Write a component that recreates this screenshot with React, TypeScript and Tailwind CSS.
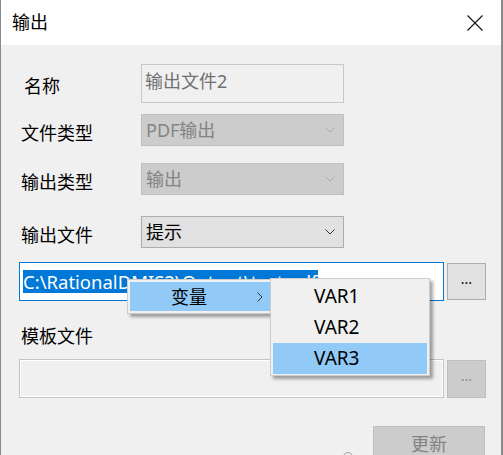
import React from "react";

const font = { fontFamily: '"Noto Sans", "Noto Sans CJK SC", sans-serif' };

function Chevron({ color }: { color: string }) {
  return (
    <svg width="10" height="6" viewBox="0 0 10 6" className="shrink-0">
      <path d="M0.5 0.5 L5 5 L9.5 0.5" fill="none" stroke={color} strokeWidth="1" />
    </svg>
  );
}

function Combo({ text, disabled }: { text: string; disabled?: boolean }) {
  return (
    <div
      className={
        disabled
          ? "flex h-[32px] w-[203px] items-center justify-between border border-[#bfbfbf] bg-[#cccccc] pl-[4px] pr-[8px] text-[#838383]"
          : "flex h-[32px] w-[203px] items-center justify-between border border-[#adadad] bg-[#e1e1e1] pl-[4px] pr-[8px] text-black"
      }
    >
      <span className="leading-none">{text}</span>
      <Chevron color={disabled ? "#a8a8a8" : "#333333"} />
    </div>
  );
}

function Row({ label, children, top }: { label: string; children: React.ReactNode; top: string }) {
  return (
    <div className={`flex h-[32px] items-center ${top}`}>
      <div className="w-[120px] pt-[6px] leading-none text-black">{label}</div>
      {children}
    </div>
  );
}

export default function App() {
  return (
    <div
      className="relative h-[455px] w-[503px] overflow-hidden border-r-2 border-l border-[#8a8a8a] bg-[#f0f0f0] text-[18px]"
      style={font}
    >
      {/* title bar */}
      <div className="flex h-[45px] items-center justify-between bg-white pl-[11px] pr-[18px]">
        <span className="pb-[1px] text-black">输出</span>
        <svg width="16" height="16" viewBox="0 0 16 16">
          <path d="M0.5 0.5 L15.5 15.5 M15.5 0.5 L0.5 15.5" stroke="#111" strokeWidth="1.1" />
        </svg>
      </div>

      <div className="flex flex-col pl-[20px]">
        <div className="mt-[19px] flex h-[39px] items-center">
          <div className="w-[120px] pt-[5px] pl-[3px] leading-none text-black">名称</div>
          <div className="flex h-[39px] w-[203px] items-start border border-[#c8c8c8] bg-[#f0f0f0] pl-[3px] pt-[4px] text-[#707070]">
            <span className="leading-[24px]">输出文件2</span>
          </div>
        </div>

        <Row label="文件类型" top="mt-[11px]">
          <Combo text="PDF输出" disabled />
        </Row>
        <Row label="输出类型" top="mt-[17px]">
          <Combo text="输出" disabled />
        </Row>
        <Row label="输出文件" top="mt-[21px]">
          <Combo text="提示" />
        </Row>

        <div className="ml-[-2px] mt-[14px] flex h-[39px] items-center gap-[3px]">
          <div className="flex h-[39px] w-[425px] items-center border border-[#0078d7] bg-white pl-[3px]">
            <span className="bg-[#0078d7] text-[18.5px] leading-[23px] text-white">
              C:\RationalDMIS2\Output\test.pdf
            </span>
          </div>
          <div className="flex h-[37px] w-[39px] items-center justify-center border border-[#adadad] bg-[#e1e1e1] pb-[6px] text-[14px] text-black">
            ...
          </div>
        </div>

        <div className="mt-[21px] h-[28px] leading-[28px] text-black">模板文件</div>

        <div className="ml-[-2px] mt-[9px] flex h-[39px] items-center gap-[3px]">
          <div className="h-[39px] w-[425px] border border-[#c4c4c4] bg-[#f0f0f0] shadow-[inset_0_0_0_1px_#ffffff]" />
          <div className="flex h-[38px] w-[39px] items-center justify-center border border-[#bfbfbf] bg-[#cccccc] pb-[6px] text-[14px] text-[#8a8a8a]">
            ...
          </div>
        </div>

        <div className="mt-[28px] flex items-start justify-end pr-[16px]">
          <div className="mr-[20px] mt-[26px] h-[10px] w-[10px] rounded-full border border-[#9a9a9a]" />
          <div className="flex h-[34px] w-[112px] items-start justify-center border border-[#bfbfbf] bg-[#cccccc] pt-[5px] leading-[24px] text-[#838383]">
            更新
          </div>
        </div>
      </div>

      {/* context menu */}
      <div className="absolute left-[126px] top-[279px] h-[35px] w-[146px] border border-[#cccccc] bg-[#f0f0f0] p-[2px] shadow-[3px_3px_3px_rgba(0,0,0,0.35)]">
        <div className="flex h-full items-center bg-[#91c9f7] pl-[41px] text-black">
          <span className="leading-none">变量</span>
          <svg width="6" height="10" viewBox="0 0 6 10" className="ml-[50px]">
            <path d="M0.5 0.5 L5 5 L0.5 9.5" fill="none" stroke="#333" strokeWidth="1" />
          </svg>
        </div>
      </div>
      <div className="absolute left-[269px] top-[278px] w-[160px] border border-[#cccccc] bg-[#f0f0f0] px-[2px] pt-[2px] pb-[1px] shadow-[3px_3px_3px_rgba(0,0,0,0.35)]">
        {["VAR1", "VAR2", "VAR3"].map((v, i) => (
          <div
            key={v}
            className={
              i === 2
                ? "flex h-[31px] items-center bg-[#91c9f7] pl-[41px] text-[19px] text-black"
                : "flex h-[31px] items-center pl-[41px] text-[19px] text-black"
            }
          >
            {v}
          </div>
        ))}
      </div>
    </div>
  );
}
